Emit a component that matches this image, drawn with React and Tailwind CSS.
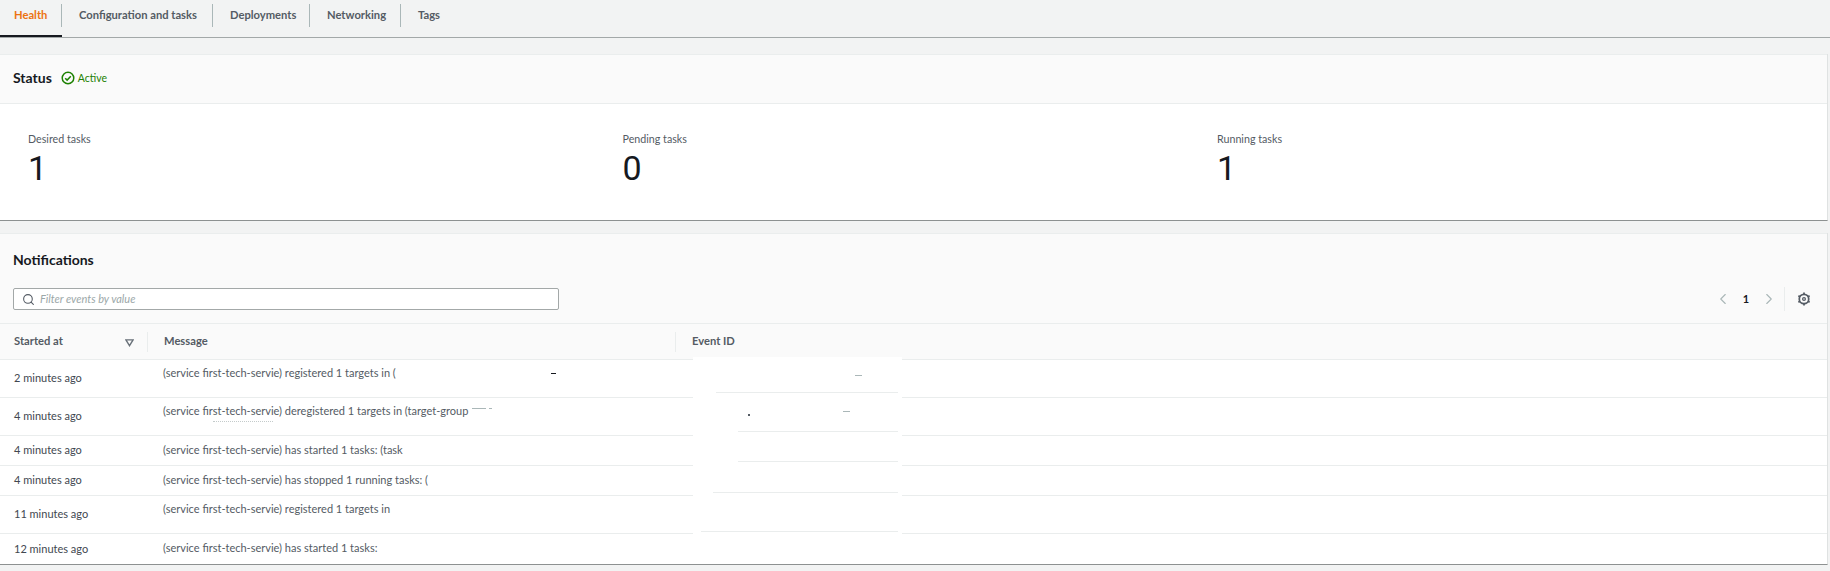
import React from "react";
import { Search, ChevronLeft, ChevronRight } from "lucide-react";

const tabs = [
  ["Health", "w-[62px] pl-[14px] text-[#ec7211]"],
  ["Configuration and tasks", "w-[151px] pl-[17px]"],
  ["Deployments", "w-[97px] pl-[17px]"],
  ["Networking", "w-[91px] pl-[17px]"],
  ["Tags", "w-[70px] pl-[17px]"],
];

const stats = [
  ["Desired tasks", "1"],
  ["Pending tasks", "0"],
  ["Running tasks", "1"],
];

const rows = [
  ["h-[38px]", "pt-[5px]", "2 minutes ago", "(service first-tech-servie) registered 1 targets in ("],
  ["h-[38px]", "pt-[5px]", "4 minutes ago", "(service first-tech-servie) deregistered 1 targets in (target-group"],
  ["h-[30px]", "pt-0", "4 minutes ago", "(service first-tech-servie) has started 1 tasks: (task"],
  ["h-[30px]", "pt-0", "4 minutes ago", "(service first-tech-servie) has stopped 1 running tasks: ("],
  ["h-[38px]", "pt-[5px]", "11 minutes ago", "(service first-tech-servie) registered 1 targets in"],
  ["h-[31px]", "pt-0", "12 minutes ago", "(service first-tech-servie) has started 1 tasks:"],
];

function GoodIcon() {
  return (
    <svg viewBox="0 0 16 16" className="w-[14px] h-[14px] shrink-0" fill="none" stroke="#1d8102" strokeWidth="1.7">
      <circle cx="8" cy="8" r="6.6" />
      <path d="M4.8 8.2l2.2 2.2 4.2-4.4" />
    </svg>
  );
}

function SortIcon() {
  return (
    <svg viewBox="0 0 10 10" className="w-[9px] h-[9px]" fill="none" stroke="#687078" strokeWidth="1.5">
      <path d="M1 2h8L5 8.5z" />
    </svg>
  );
}

function GearIcon() {
  return (
    <svg viewBox="0 0 16 16" className="w-[14px] h-[14px]" fill="none" stroke="#545b64">
      <circle cx="8" cy="8" r="5.4" strokeWidth="2" />
      <circle cx="8" cy="8" r="1.6" strokeWidth="1.4" />
      <path d="M8 0.6v2M8 13.4v2M1.6 4.3l1.7 1M12.7 10.7l1.7 1M1.6 11.7l1.7-1M12.7 5.3l1.7-1" strokeWidth="2" />
    </svg>
  );
}

export default function App() {
  return (
    <div className="w-[1830px] h-[571px] overflow-hidden bg-[#f2f3f3] text-[#545b64] font-['Lato','Liberation_Sans',sans-serif] text-[11px]">
      <nav className="relative flex h-[38px] border-b border-[#a3a8a8]">
        {tabs.map(([t, c], i) => (
          <div key={t} className={`relative flex items-start pt-[7px] h-[37px] font-bold text-[11.2px] ${c}`}>
            <span>{t}</span>
            {i < 4 && <span className="absolute right-0 top-[4px] h-[23px] w-px bg-[#aab7b8]" />}
          </div>
        ))}
        <span className="absolute left-0 top-[35px] h-[2px] w-[62px] bg-[#16191f]" />
      </nav>

      <section className="mt-[16px] w-[1828px] bg-white border-b border-r border-b-[#8d9191] border-r-[#dfe2e2]">
        <header className="flex items-center h-[50px] pl-[13px] pb-[2px] bg-[#fafafa] border-y border-[#eaeded]">
          <h2 className="text-[14px] font-bold text-[#16191f] mr-[9px] relative bottom-[1px]">Status</h2>
          <GoodIcon />
          <span className="ml-[3px] mt-[2px] text-[10.5px] text-[#1d8102]">Active</span>
        </header>
        <div className="grid grid-cols-[594.5px_594.5px_1fr] h-[116px] pl-[28px] pt-[27px]">
          {stats.map(([l, v]) => (
            <div key={l}>
              <div className="leading-[16px] text-[10.7px]">{l}</div>
              <div className="text-[34px] leading-[42px] font-['Roboto',sans-serif] font-normal text-[#16191f]">{v}</div>
            </div>
          ))}
        </div>
      </section>

      <section className="relative mt-[12px] w-[1828px] bg-white border-b border-r border-b-[#8d9191] border-r-[#dfe2e2]">
        <div className="bg-[#fafafa] border-t border-[#eaeded]">
          <h2 className="pl-[13px] pt-[17px] text-[14px] leading-[18px] font-bold text-[#16191f]">Notifications</h2>
          <div className="flex items-center h-[22px] mt-[19px] pr-[16px]">
            <div className="flex items-center gap-[5px] ml-[13px] w-[546px] h-[22px] pl-[8px] bg-white border border-[#a3a8a8] rounded-[2px]">
              <Search size={13} color="#545b64" strokeWidth={2} />
              <span className="italic text-[#9ba7a8]">Filter events by value</span>
            </div>
            <div className="ml-auto flex items-center h-[24px] text-[#aab7b8]">
              <ChevronLeft size={18} strokeWidth={1.5} />
              <span className="w-[28px] text-center font-bold text-[#16191f]">1</span>
              <ChevronRight size={18} strokeWidth={1.5} />
              <span className="ml-[6px] mr-[12px] h-[24px] w-px bg-[#eaeded]" />
              <GearIcon />
            </div>
          </div>
          <div className="grid grid-cols-[148px_528px_1fr] items-center h-[36px] mt-[13px] border-t border-[#eaeded] font-bold text-[11.2px]">
            <div className="relative flex items-center h-[24px] pl-[14px]">
              Started at
              <span className="absolute right-[14px] top-[8px] flex"><SortIcon /></span>
              <span className="absolute right-0 top-[2px] h-[20px] w-px bg-[#eaeded]" />
            </div>
            <div className="relative flex items-center h-[24px] pl-[16px]">
              Message
              <span className="absolute right-0 top-[2px] h-[20px] w-px bg-[#eaeded]" />
            </div>
            <div className="pl-[16px]">Event ID</div>
          </div>
        </div>

        {rows.map(([h, pt, time, msg], i) => (
          <div key={i} className={`grid grid-cols-[148px_1fr] items-center ${h} border-t border-[#eaeded]`}>
            <div className="pl-[14px] text-[#414750]">{time}</div>
            <div className={`self-start pl-[15px] ${pt} ${pt === "pt-0" ? "leading-[28px]" : ""} whitespace-nowrap`}>{msg}</div>
          </div>
        ))}

        {/* Redacted area pasted over the table */}
        <div className="absolute left-[693px] top-[124px] bottom-0 w-[209px] bg-white pt-[35px]">
          <div className="h-[39px] border-t border-[#eaeded] ml-[23px] mr-[4px]" />
          <div className="h-[30px] border-t border-[#eaeded] ml-[45px] mr-[4px]" />
          <div className="h-[31px] border-t border-[#eaeded] ml-[45px] mr-[4px]" />
          <div className="h-[39px] border-t border-[#eaeded] ml-[20px] mr-[4px]" />
          <div className="border-t border-[#eaeded] ml-[8px] mr-[4px]" />
        </div>
        <span className="absolute left-[551px] top-[140px] h-px w-[5px] bg-[#16191f]" />
        <span className="absolute left-[748px] top-[181px] h-[2px] w-[2px] bg-[#545b64]" />
        <span className="absolute left-[843px] top-[178px] h-px w-[7px] bg-[#aab7b8]" />
        <span className="absolute left-[855px] top-[142px] h-px w-[7px] bg-[#aab7b8]" />
        <span className="absolute left-[472px] top-[175px] h-px w-[14px] bg-[#aab7b8]" />
        <span className="absolute left-[489px] top-[175px] h-px w-[3px] bg-[#aab7b8]" />
        <span className="absolute left-[213px] top-[188px] w-[60px] border-t border-dotted border-[#c4cbcb]" />
      </section>
    </div>
  );
}
